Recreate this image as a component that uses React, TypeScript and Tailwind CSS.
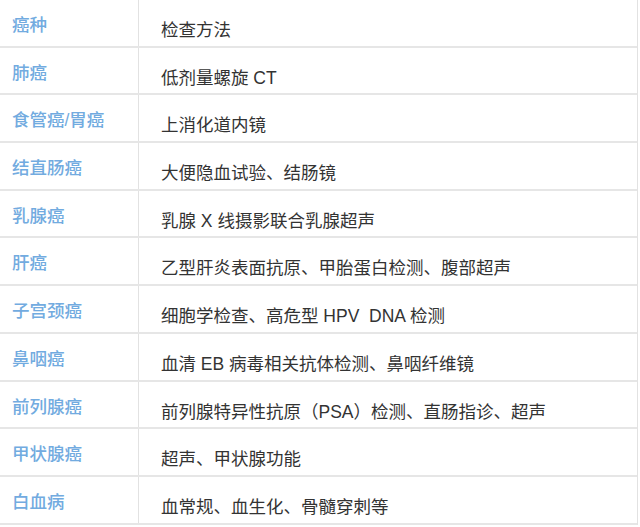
const rows: [string, string][] = [
  ["癌种", "检查方法"],
  ["肺癌", "低剂量螺旋 CT"],
  ["食管癌/胃癌", "上消化道内镜"],
  ["结直肠癌", "大便隐血试验、结肠镜"],
  ["乳腺癌", "乳腺 X 线摄影联合乳腺超声"],
  ["肝癌", "乙型肝炎表面抗原、甲胎蛋白检测、腹部超声"],
  ["子宫颈癌", "细胞学检查、高危型 HPV  DNA 检测"],
  ["鼻咽癌", "血清 EB 病毒相关抗体检测、鼻咽纤维镜"],
  ["前列腺癌", "前列腺特异性抗原（PSA）检测、直肠指诊、超声"],
  ["甲状腺癌", "超声、甲状腺功能"],
  ["白血病", "血常规、血生化、骨髓穿刺等"],
];

export default function App() {
  return (
    <div
      className="w-[640px] h-[527px] bg-white overflow-hidden"
      style={{ fontFamily: '"Liberation Sans", "Noto Sans CJK SC", sans-serif' }}
    >
      <div className="w-[638px] border-r border-[#e2e2e2]">
        {rows.map(([kind, method]) => (
          <div
            key={kind}
            className="flex h-[47.7px] border-b-2 border-[#e6e6e6]"
          >
            <div className="w-[139px] shrink-0 border-r border-[#e2e2e2] pl-[12px] pt-[13px] text-[17.5px] leading-[24px] font-medium text-[#72abe0] whitespace-pre">
              {kind}
            </div>
            <div className="flex-1 pl-[22px] pt-[18px] text-[17.5px] leading-[24px] text-[#333333] whitespace-pre">
              {method}
            </div>
          </div>
        ))}
      </div>
    </div>
  );
}
